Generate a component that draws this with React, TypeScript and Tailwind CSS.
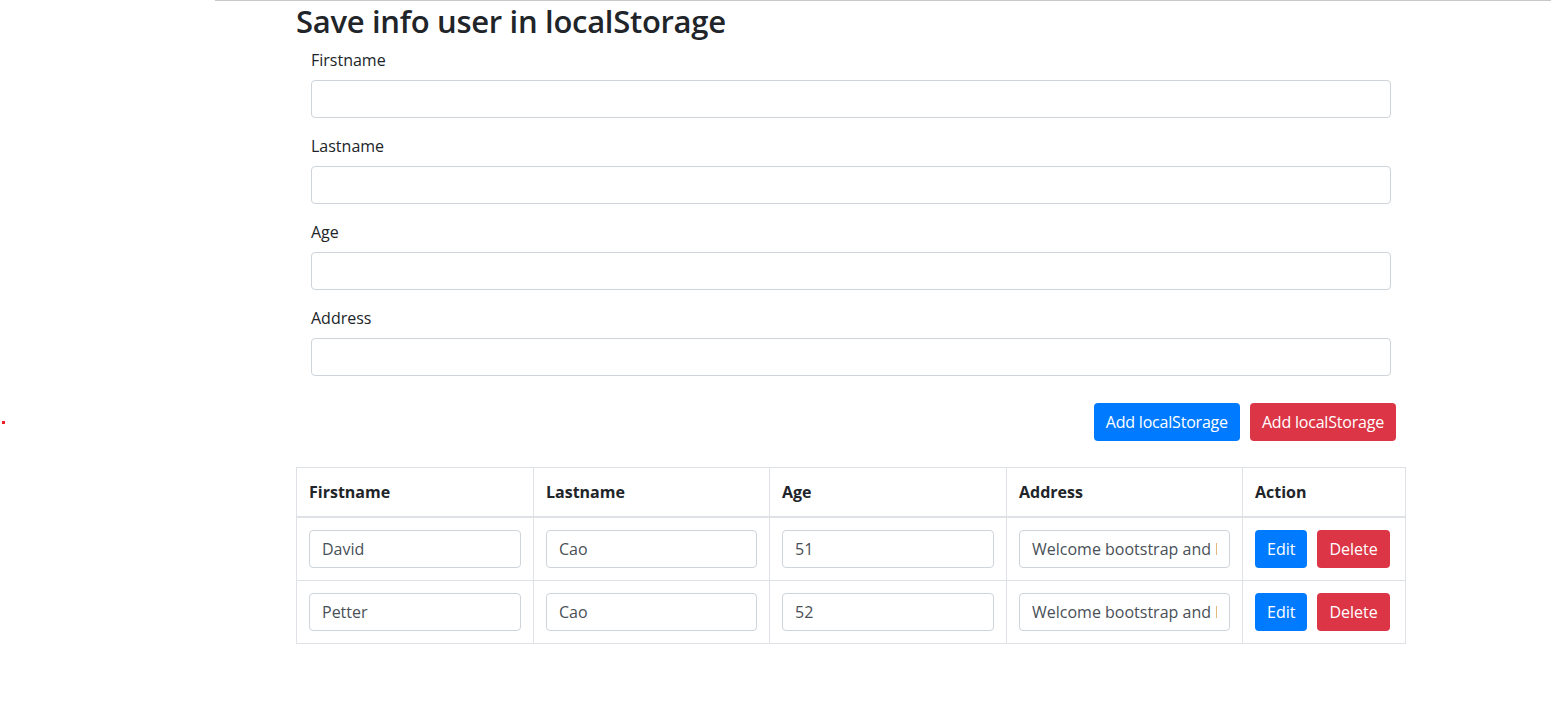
import React from "react";

const font = { fontFamily: '"Segoe UI", "Open Sans", "Noto Sans", sans-serif' };

function Field({ label }: { label: string }) {
  return (
    <div className="mb-4">
      <label className="block mb-2 text-[16px] leading-6 text-[#212529]">{label}</label>
      <input className="block w-full h-[38px] px-3 py-[6px] border border-[#ced4da] rounded-[4px] bg-white text-[16px] text-[#495057] outline-none" />
    </div>
  );
}

function CellInput({ value }: { value: string }) {
  return (
    <input
      readOnly
      value={value}
      className="block w-full h-[38px] px-3 py-[6px] border border-[#ced4da] rounded-[4px] bg-white text-[16px] leading-6 text-[#495057] outline-none"
    />
  );
}

const rows = [
  { f: "David", l: "Cao", a: "51", ad: "Welcome bootstrap and localStorage" },
  { f: "Petter", l: "Cao", a: "52", ad: "Welcome bootstrap and localStorage" },
];

export default function App() {
  return (
    <div className="relative min-h-[720px] bg-white text-[#212529]" style={font}>
      <div className="ml-[215px] border-t border-[#c8c8c8]" />
      <div className="absolute left-[2px] top-[421px] w-[3px] h-[3px] bg-[#ee1c25]" />
      <div className="ml-[296px] w-[1110px]">
        <h2 className="text-[31px] leading-[38.4px] font-semibold mb-2 mt-[1px] tracking-[-0.3px]">Save info user in localStorage</h2>
        <div className="px-[15px]">
          <Field label="Firstname" />
          <Field label="Lastname" />
          <Field label="Age" />
          <Field label="Address" />
        </div>
        <div className="flex justify-end gap-[10px] mt-[27px] pr-[10px]">
          <button className="h-[38px] px-3 rounded-[4px] bg-[#007bff] text-white text-[16px] tracking-[-0.2px]">Add localStorage</button>
          <button className="h-[38px] px-3 rounded-[4px] bg-[#dc3545] text-white text-[16px] tracking-[-0.2px]">Add localStorage</button>
        </div>
        <table className="mt-[26px] w-[1110px] table-fixed border-collapse border border-[#dee2e6] text-[16px]">
          <colgroup>
            <col className="w-[237px]" />
            <col className="w-[236px]" />
            <col className="w-[237px]" />
            <col className="w-[236px]" />
            <col className="w-[163px]" />
          </colgroup>
          <thead>
            <tr>
              {["Firstname", "Lastname", "Age", "Address", "Action"].map((h) => (
                <th key={h} className="text-left font-bold p-3 leading-6 border border-[#dee2e6] border-b-2">
                  {h}
                </th>
              ))}
            </tr>
          </thead>
          <tbody>
            {rows.map((r, i) => (
              <tr key={i}>
                <td className="p-3 border border-[#dee2e6]"><CellInput value={r.f} /></td>
                <td className="p-3 border border-[#dee2e6]"><CellInput value={r.l} /></td>
                <td className="p-3 border border-[#dee2e6]"><CellInput value={r.a} /></td>
                <td className="p-3 border border-[#dee2e6]"><CellInput value={r.ad} /></td>
                <td className="p-3 border border-[#dee2e6]">
                  <div className="flex gap-[10px]">
                    <button className="h-[38px] px-3 rounded-[4px] bg-[#007bff] text-white text-[16px]">Edit</button>
                    <button className="h-[38px] px-3 rounded-[4px] bg-[#dc3545] text-white text-[16px]">Delete</button>
                  </div>
                </td>
              </tr>
            ))}
          </tbody>
        </table>
      </div>
    </div>
  );
}
